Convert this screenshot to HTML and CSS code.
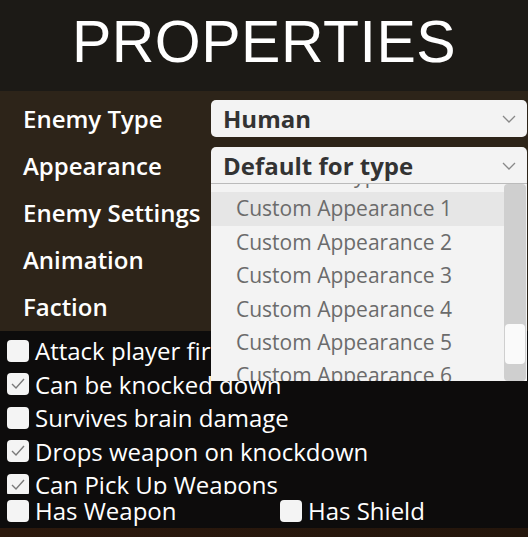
FILE: index.html
```html
<!DOCTYPE html>
<html>
<head>
    <title>Properties</title>
    <link rel="stylesheet" href="styles.css">
</head>
<body>
    <div class="title">PROPERTIES</div>

    <div class="props">
        <div class="label">Enemy Type</div>
        <div class="select">
            <span>Human</span>
            <svg class="chevron" width="14" height="8" viewBox="0 0 14 8"><polyline points="1,1 7,7 13,1" /></svg>
        </div>

        <div class="label">Appearance</div>
        <div class="select open">
            <span>Default for type</span>
            <svg class="chevron" width="14" height="8" viewBox="0 0 14 8"><polyline points="1,1 7,7 13,1" /></svg>
            <div class="dropdown">
                <div class="options">
                    <div class="option">Default for type</div>
                    <div class="option hover">Custom Appearance 1</div>
                    <div class="option">Custom Appearance 2</div>
                    <div class="option">Custom Appearance 3</div>
                    <div class="option">Custom Appearance 4</div>
                    <div class="option">Custom Appearance 5</div>
                    <div class="option">Custom Appearance 6</div>
                </div>
                <div class="scrollbar"><div class="thumb"></div></div>
            </div>
        </div>

        <div class="label">Enemy Settings</div>
        <div></div>
        <div class="label">Animation</div>
        <div></div>
        <div class="label">Faction</div>
        <div></div>
    </div>

    <div class="flags">
        <div class="flag-list">
            <div class="flag"><span class="box"></span>Attack player first</div>
            <div class="flag"><span class="box"><svg width="22" height="22" viewBox="0 0 22 22"><polyline points="5,11 9,15 17,6" /></svg></span>Can be knocked down</div>
            <div class="flag"><span class="box"></span>Survives brain damage</div>
            <div class="flag"><span class="box"><svg width="22" height="22" viewBox="0 0 22 22"><polyline points="5,11 9,15 17,6" /></svg></span>Drops weapon on knockdown</div>
            <div class="flag"><span class="box"><svg width="22" height="22" viewBox="0 0 22 22"><polyline points="5,11 9,15 17,6" /></svg></span>Can Pick Up Weapons</div>
        </div>
        <div class="flag-bottom">
            <div class="flag"><span class="box"></span>Has Weapon</div>
            <div class="flag"><span class="box"></span>Has Shield</div>
        </div>
    </div>

    <div class="footer"></div>
</body>
</html>
```

FILE: styles.css
```css
body {
    margin: 0;
    width: 528px;
    height: 537px;
    overflow: hidden;
    background-color: #0d0c0c;
    font-family: "Open Sans", sans-serif;
    color: #fff;
}
.title {
    height: 91px;
    background-color: #1c1a16;
    font-family: "Liberation Sans", Arial, sans-serif;
    font-size: 59px;
    line-height: 84px;
    text-align: center;
    letter-spacing: 0.5px;
}
.props {
    height: 240px;
    box-sizing: border-box;
    padding: 9px 1px 0 0;
    background-color: #2d2419;
    display: grid;
    grid-template-columns: 211px 1fr;
    grid-auto-rows: 37px;
    row-gap: 10px;
}
.label {
    padding-left: 23px;
    font-size: 24px;
    font-weight: 600;
    line-height: 37px;
    white-space: nowrap;
}
.select {
    position: relative;
    display: flex;
    align-items: center;
    justify-content: space-between;
    padding: 0 12px;
    background-color: #f3f3f3;
    border-radius: 5px;
    color: #333;
    font-size: 24px;
    font-weight: 700;
}
.select.open {
    border-radius: 5px 5px 0 0;
}
.chevron {
    margin-right: -1px;
    fill: none;
    stroke: #888;
    stroke-width: 1.3;
}
.dropdown {
    position: absolute;
    top: 36px;
    left: 0;
    right: 0;
    height: 197px;
    background-color: #f3f3f3;
    border-top: 1px solid #bbb;
    overflow: hidden;
    display: flex;
    z-index: 2;
}
.options {
    flex: 1;
    margin-top: -25px;
}
.option {
    height: 33.4px;
    line-height: 33.4px;
    padding-left: 25px;
    color: #6b6b6b;
    font-size: 21px;
    font-weight: 400;
    white-space: nowrap;
}
.option.hover {
    background-color: #e6e6e6;
}
.scrollbar {
    width: 22px;
    margin: 0 1px 0 0;
    background-color: #cfcfcf;
    border-radius: 4px;
    position: relative;
}
.thumb {
    position: absolute;
    left: 1px;
    right: 1px;
    top: 140px;
    height: 40px;
    background-color: #fafafa;
    border-radius: 4px;
}
.flags {
    height: 197px;
}
.flag-list {
    height: 163px;
    box-sizing: border-box;
    padding-top: 3px;
    overflow: hidden;
}
.flag {
    display: flex;
    align-items: center;
    height: 33.5px;
    font-size: 24px;
    white-space: nowrap;
}
.box {
    width: 22px;
    height: 22px;
    margin: 0 6px 0 7px;
    background-color: #f4f4f4;
    border-radius: 4px;
    flex-shrink: 0;
}
.box svg {
    display: block;
    fill: none;
    stroke: #7a7a7a;
    stroke-width: 1.4;
}
.flag-bottom {
    display: grid;
    grid-template-columns: 273px 1fr;
}
.footer {
    height: 9px;
    background: linear-gradient(to right, #2c190d, #24160c);
}
```
